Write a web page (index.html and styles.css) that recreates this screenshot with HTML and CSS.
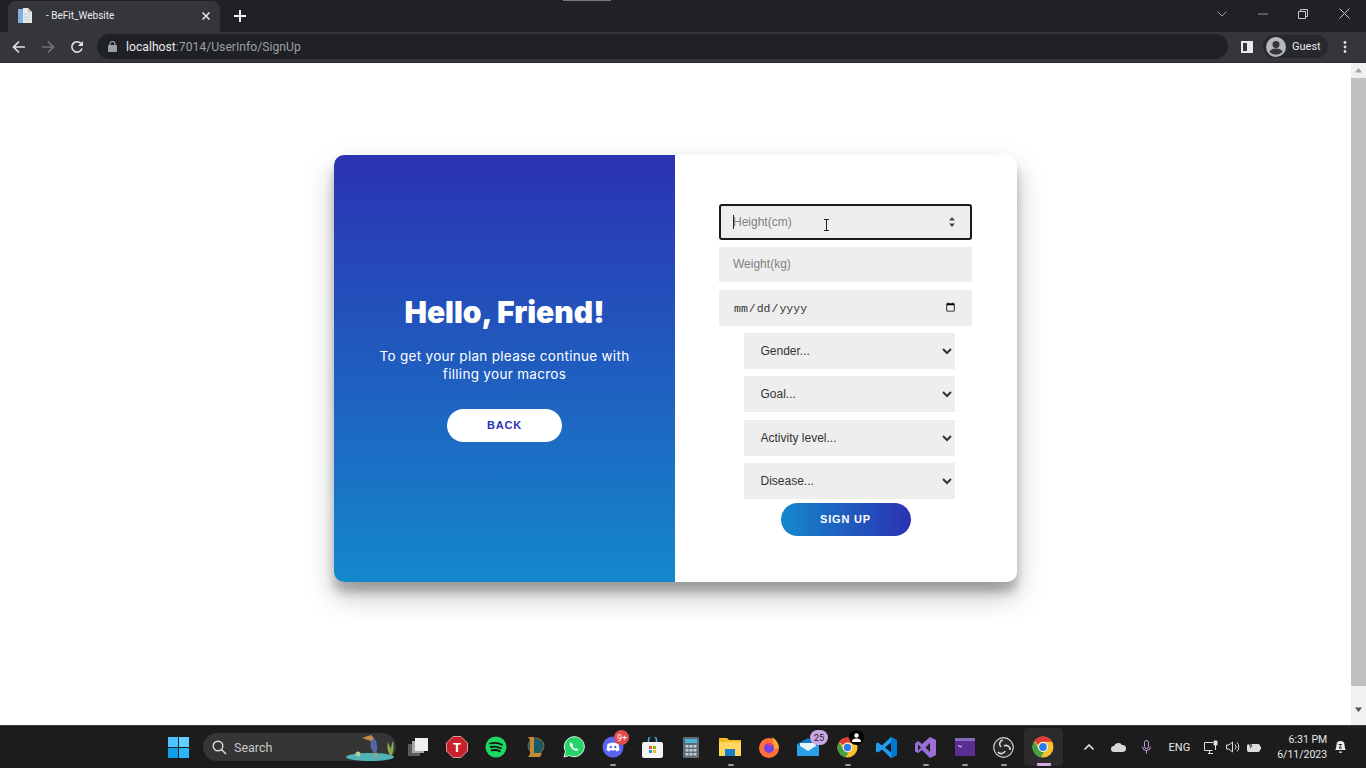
FILE: index.html
```html
<!DOCTYPE html>
<html lang="en">
<head>
    <meta charset="UTF-8">
    <title>BeFit_Website</title>
    <link rel="stylesheet" href="styles.css">
</head>
<body>
    <div class="capture-notch"></div>
    <!-- Browser tab strip -->
    <div class="tabstrip">
        <div class="tab">
            <svg class="favicon" width="14" height="15" viewBox="0 0 14 15"><path d="M0 1h5l1 1v13H0z" fill="#7fb2e0"/><path d="M5 0h5l4 4v11H5z" fill="#e8e8e8"/><path d="M10 0l4 4h-4z" fill="#b8b8b8"/><path d="M6 6h6M6 9h6M6 12h6" stroke="#bcd2e6"/></svg>
            <span class="tab-title">- BeFit_Website</span>
            <svg width="10" height="10" viewBox="0 0 10 10"><path d="M1.5 1.5l7 7M8.500 1.500l-7 7" stroke="#e8eaed" stroke-width="1.500"/></svg>
        </div>
        <svg class="newtab" width="12" height="12" viewBox="0 0 12 12"><path d="M6 0v12M0 6h12" stroke="#f1f3f4" stroke-width="2"/></svg>
        <div class="window-btns">
            <svg width="10" height="6" viewBox="0 0 10 6"><path d="M.5.500L5 5 9.500.500" fill="none" stroke="#9aa0a6"/></svg>
            <svg width="10" height="2" viewBox="0 0 10 2"><path d="M0 1h10" stroke="#8f9297"/></svg>
            <svg width="10" height="10" viewBox="0 0 10 10"><path d="M.5 2.500h7v7h-7zM2.500 2.500V.500h7v7h-2" fill="none" stroke="#c4c6c9"/></svg>
            <svg width="11" height="11" viewBox="0 0 11 11"><path d="M.5.500l10 10M10.500.500l-10 10" stroke="#c4c6c9"/></svg>
        </div>
    </div>

    <!-- Address bar row -->
    <div class="toolbar">
        <svg class="nav" width="14" height="14" viewBox="0 0 14 14"><path d="M13 7H2M7 1.500L1.500 7 7 12.500" fill="none" stroke="#dfe1e5" stroke-width="1.700"/></svg>
        <svg class="nav" width="14" height="14" viewBox="0 0 14 14"><path d="M1 7h11M7 1.500L12.500 7 7 12.500" fill="none" stroke="#6f7276" stroke-width="1.700"/></svg>
        <svg class="nav" width="14" height="14" viewBox="0 0 14 14"><path d="M12 8.500A5.200 5.200 0 1 1 11 3.500" fill="none" stroke="#dfe1e5" stroke-width="1.600"/><path d="M13 1v5H8z" fill="#dfe1e5"/></svg>
        <div class="omnibox">
            <svg width="9" height="11" viewBox="0 0 9 11"><rect y="4" width="9" height="7" rx="1" fill="#9aa0a6"/><path d="M2 4.500V3a2.500 2.500 0 0 1 5 0v1.500" fill="none" stroke="#9aa0a6" stroke-width="1.200"/></svg>
            <span class="url"><span class="url-host">localhost</span>:7014/UserInfo/SignUp</span>
        </div>
        <svg class="sidepanel" width="12" height="12" viewBox="0 0 12 12"><path d="M0 0h12v12H0z" fill="#e8eaed"/><path d="M2 2h4v8H2z" fill="#35363a"/></svg>
        <div class="profile">
            <svg width="20" height="20" viewBox="0 0 20 20"><circle cx="10" cy="10" r="10" fill="#b5b7ba"/><circle cx="10" cy="7.500" r="3.500" fill="#35363a"/><path d="M3.500 15c1-3 4-3.500 6.500-3.500s5.500.5 6.500 3.500a9 9 0 0 1-13 0z" fill="#35363a"/></svg>
            <span>Guest</span>
        </div>
        <svg class="menu-dots" width="4" height="12" viewBox="0 0 4 12"><circle cx="2" cy="1.500" r="1.400" fill="#dfe1e5"/><circle cx="2" cy="6" r="1.400" fill="#dfe1e5"/><circle cx="2" cy="10.500" r="1.400" fill="#dfe1e5"/></svg>
    </div>

    <!-- Page -->
    <div class="viewport">
        <div class="page">
            <div class="card">
                <div class="panel">
                    <h1>Hello, Friend!</h1>
                    <p>To get your plan please continue with filling your macros</p>
                    <button class="btn btn-ghost">Back</button>
                </div>
                <form class="form">
                    <div class="field-wrap">
                        <input class="field" type="text" placeholder="Height(cm)" autofocus>
                        <i class="caret"></i>
                        <svg class="spinner" width="6" height="10" viewBox="0 0 6 10"><path d="M3 0l3 3.500H0zM3 10L0 6.500h6z" fill="#444"/></svg>
                    </div>
                    <input class="field field-weight" type="text" placeholder="Weight(kg)">
                    <input class="field field-date" type="date">
                    <select class="pick"><option>Gender...</option></select>
                    <select class="pick"><option>Goal...</option></select>
                    <select class="pick pick-activity"><option>Activity level...</option></select>
                    <select class="pick"><option>Disease...</option></select>
                    <button class="btn btn-fill" type="button">Sign up</button>
                </form>
            </div>
        </div>
        <div class="scrollbar">
            <svg width="15" height="15" viewBox="0 0 15 15"><path d="M7.500 5L11 9.500H4z" fill="#a3a3a3"/></svg>
            <div class="thumb"></div>
            <svg width="15" height="15" viewBox="0 0 15 15"><path d="M7.500 10L11 5.500H4z" fill="#505050"/></svg>
        </div>
        <!-- mouse pointer over the first field -->
        <svg class="ibeam" width="7" height="12" viewBox="0 0 7 12"><path d="M1 .500h5M1 11.500h5M3.500.500v11" fill="none" stroke="#222"/></svg>
    </div>

    <!-- Windows taskbar -->
    <div class="taskbar">
        <svg class="winlogo" width="21" height="21" viewBox="0 0 21 21"><path d="M0 0h10v10H0z" fill="#4cc2ff"/><path d="M11 0h10v10H11z" fill="#5fd0ff"/><path d="M0 11h10v10H0z" fill="#0f9fe8"/><path d="M11 11h10v10H11z" fill="#2bb5f5"/></svg>
        <div class="search">
            <svg width="15" height="15" viewBox="0 0 15 15"><circle cx="6" cy="6" r="4.800" fill="none" stroke="#ddd" stroke-width="1.400"/><path d="M9.500 9.500L14 14" stroke="#ddd" stroke-width="1.500"/></svg>
            <span>Search</span>
            <svg class="bird" width="52" height="28" viewBox="0 0 52 28"><ellipse cx="24" cy="24" rx="24" ry="4" fill="#4fb3b8"/><path d="M26 4c4 1 6 8 5 14l-3 2c-3-3-5-9-2-16z" fill="#5566a8"/><path d="M16 5l9-3 3 3-3 3z" fill="#c98a4a"/><path d="M28 20v5M30 19v6" stroke="#c9a070"/><path d="M44 22c-3-5-3-9-2-13 1 3 2 5 3 7 0-3 1-6 2-8 1 5 1 9-1 14z" fill="#88a84a"/><circle cx="12" cy="21" r="2.500" fill="#b8c8a0"/></svg>
        </div>
        <div class="apps">
            <div class="app"><svg width="20" height="18" viewBox="0 0 20 18"><rect x="0" y="6" width="12" height="12" fill="#5d5d5d"/><rect x="4" y="3" width="12" height="12" fill="#a8a8a8"/><rect x="7" y="0" width="13" height="13" fill="#f0f0f0"/></svg></div>
            <div class="app"><svg width="22" height="22" viewBox="0 0 22 22"><path d="M7 .500h8L21.500 7v8L15 21.500H7L.500 15V7z" fill="#c8202c" stroke="#d9a0a0"/><text x="11" y="15.500" class="glyph">T</text></svg></div>
            <div class="app"><svg width="22" height="22" viewBox="0 0 22 22"><circle cx="11" cy="11" r="10.500" fill="#1ed760"/><path d="M5 7.500c4-1 8.500-.8 12 1.200M5.800 11c3.500-.8 7-.5 10 1.200M6.500 14.300c3-.6 5.800-.4 8.300 1" fill="none" stroke="#111" stroke-width="1.800" stroke-linecap="round"/></svg></div>
            <div class="app"><svg width="20" height="22" viewBox="0 0 20 22"><circle cx="11" cy="10" r="8" fill="#1a5a6a" stroke="#8a6a30"/><path d="M3 1h6v16h8l-2 4H3l2-3V4z" fill="#c08a3a"/></svg></div>
            <div class="app"><svg width="22" height="22" viewBox="0 0 22 22"><path d="M1 21l1.500-5.500A10 10 0 1 1 6.500 19.500z" fill="#25d366" stroke="#e8f5ec"/><path d="M7.500 6c-1.500 1.500-1 4 1.500 6.500s5 3 6.500 1.500l-2.200-2-1.300.8c-1-.5-2-1.500-2.500-2.500l.8-1.300z" fill="#fff"/></svg></div>
            <div class="app"><svg width="22" height="22" viewBox="0 0 22 22"><circle cx="11" cy="11" r="10.500" fill="#5865f2"/><path d="M5.500 8c3.500-2 7.500-2 11 0l1 6c-1 .8-2 1.200-3 1.400l-.8-1.300c-1.700.5-3.700.5-5.400 0l-.8 1.300c-1-.2-2-.6-3-1.400z" fill="#fff"/><circle cx="8.700" cy="11" r="1.200" fill="#5865f2"/><circle cx="13.300" cy="11" r="1.200" fill="#5865f2"/></svg><span class="badge badge-red">9+</span><i class="dot"></i></div>
            <div class="app"><svg width="21" height="21" viewBox="0 0 21 21"><path d="M6.500 5V3a4 4 0 0 1 8 0v2" fill="none" stroke="#3fb5e8" stroke-width="1.500"/><rect y="5" width="21" height="16" rx="2" fill="#f4f4f4"/><path d="M7 9h3v3H7z" fill="#f25022"/><path d="M11 9h3v3h-3z" fill="#7fba00"/><path d="M7 13h3v3H7z" fill="#00a4ef"/><path d="M11 13h3v3h-3z" fill="#ffb900"/></svg></div>
            <div class="app"><svg width="16" height="21" viewBox="0 0 16 21"><rect width="16" height="21" rx="1" fill="#5d6b75"/><rect x="2" y="2" width="12" height="4" fill="#4fb3d9"/><path d="M2.500 8h3v2.500h-3zM6.500 8h3v2.500h-3zM10.500 8h3v2.500h-3zM2.500 12h3v2.500h-3zM6.500 12h3v2.500h-3zM10.500 12h3v2.500h-3zM2.500 16h3v2.500h-3zM6.500 16h3v2.500h-3zM10.500 16h3v2.500h-3z" fill="#c5ced4"/></svg></div>
            <div class="app"><svg width="22" height="18" viewBox="0 0 22 18"><path d="M0 0h8l2 2h12v16H0z" fill="#f5b921"/><path d="M0 4h22v14H0z" fill="#ffd75e"/><path d="M6 11h10v7H6z" fill="#1a7fc8"/></svg><i class="dot"></i></div>
            <div class="app"><svg width="20" height="21" viewBox="0 0 20 21"><circle cx="10" cy="11" r="10" fill="#ff7139"/><path d="M13 0c5 3 7 8 7 11l-5 1c0-4-1-8-2-12z" fill="#ffa436"/><circle cx="10" cy="11" r="5" fill="#7542e5"/><path d="M6 7c3-2 7-1 8 2-3-1-5-1-8-2z" fill="#ff3d5a"/></svg></div>
            <div class="app"><svg width="22" height="18" viewBox="0 0 22 18"><path d="M0 6L11 0l11 6v12H0z" fill="#0f78c8"/><path d="M3 5h16v5l-8 4-8-4z" fill="#e8f2fa"/><path d="M0 6l11 7 11-7v12H0z" fill="#2ba0e8"/></svg><span class="badge badge-lilac">25</span></div>
            <div class="app"><svg class="chrome" width="21" height="21" viewBox="0 0 22 22"><use href="#chrome-logo"/></svg><span class="badge badge-black"><svg width="9" height="9" viewBox="0 0 9 9"><circle cx="4.500" cy="2.500" r="2.200" fill="#fff"/><path d="M0 9c0-3 2-3.500 4.500-3.500S9 6 9 9z" fill="#fff"/></svg></span><i class="dot"></i></div>
            <div class="app"><svg width="21" height="21" viewBox="0 0 21 21"><path d="M15 0l6 3v15l-6 3L6 12.500 2 15.500 0 14.500v-8l2-1 4 3z" fill="#1f9cf0"/><path d="M15 5.500L9 10.500l6 5z" fill="#1a1a1a"/><path d="M15 0l6 3v15l-6 3z" fill="#0078d4"/></svg></div>
            <div class="app"><svg width="21" height="21" viewBox="0 0 21 21"><path d="M15 0l6 3v15l-6 3-8-8-4 3-3-1.500v-8L3 4l4 3z" fill="#9a6fd8"/><path d="M15 6l-4.500 4.500L15 15z" fill="#1f1f1f"/><path d="M3 7.500v6l3-3z" fill="#1f1f1f"/></svg><i class="dot"></i></div>
            <div class="app"><svg width="20" height="18" viewBox="0 0 20 18"><rect width="20" height="18" fill="#5a2d91"/><rect width="20" height="3" fill="#8a6ab8"/><path d="M3 7l2 2 2-1" fill="none" stroke="#ddd"/></svg><i class="dot"></i></div>
            <div class="app"><svg width="21" height="21" viewBox="0 0 21 21"><circle cx="10.500" cy="10.500" r="9.800" fill="#2a2a2a" stroke="#d0d0d0" stroke-width="1.200"/><path d="M10 3a4 4 0 0 0-2 7M17 13a4 4 0 0 0-6-4M5 15a4 4 0 0 0 7-1" fill="none" stroke="#d8d8d8" stroke-width="1.600"/></svg><i class="dot"></i></div>
            <div class="app app-active"><svg width="22" height="22" viewBox="0 0 22 22"><use href="#chrome-logo"/></svg><i class="dot dot-active"></i></div>
        </div>
        <div class="tray">
            <svg class="tray-caret" width="10" height="6" viewBox="0 0 10 6"><path d="M.500 5.500L5 1l4.500 4.500" fill="none" stroke="#eee" stroke-width="1.500"/></svg>
            <svg class="tray-cloud" width="15" height="9" viewBox="0 0 15 9"><path d="M3 9a3 3 0 0 1 0-6 4.500 4.500 0 0 1 8-1 3.500 3.500 0 0 1 1 7z" fill="#d8d8d8"/></svg>
            <svg class="tray-mic" width="9" height="14" viewBox="0 0 9 14"><rect x="2.500" y=".500" width="4" height="8" rx="2" fill="none" stroke="#c9a0dc"/><path d="M.500 6.500a4 4 0 0 0 8 0M4.500 10.500v3" fill="none" stroke="#c9a0dc"/></svg>
            <span class="tray-lang">ENG</span>
            <svg class="tray-net" width="14" height="14" viewBox="0 0 14 14"><path d="M9 2.500H.500v8h8M4 13.500h5M5.500 10.500v3" fill="none" stroke="#ddd"/><path d="M10 1h3v4h-3zM11.500 5v5" fill="#ddd" stroke="#ddd"/></svg>
            <svg class="tray-vol" width="15" height="12" viewBox="0 0 15 12"><path d="M.500 4h2.500L6.500 1v10L3 8H.500z" fill="none" stroke="#ddd"/><path d="M9 3.500a3.500 3.500 0 0 1 0 5M11 1.500a6.500 6.500 0 0 1 0 9" fill="none" stroke="#ddd"/></svg>
            <svg class="tray-bat" width="15" height="12" viewBox="0 0 15 12"><rect x=".500" y="3.500" width="12" height="7" rx="1" fill="#ddd" stroke="#ddd"/><path d="M13.500 5.500v3" stroke="#ddd"/><path d="M4 0L2 4h3L3 7" fill="none" stroke="#222"/></svg>
            <div class="clock"><span>6:31 PM</span><span>6/11/2023</span></div>
            <svg class="tray-bell" width="13" height="14" viewBox="0 0 13 14"><path d="M1 10c1.500-1 1-3 1.500-5a4 4 0 0 1 8 0c.500 2 0 4 1.500 5z" fill="#eee"/><path d="M5 11.500a1.500 1.500 0 0 0 3 0z" fill="#eee"/><path d="M4.500 4.500h3L5 8h3" fill="none" stroke="#222"/></svg>
        </div>
    </div>

    <!-- shared chrome logo -->
    <svg class="defs" width="0" height="0">
        <defs>
            <g id="chrome-logo">
                <circle cx="11" cy="11" r="10.500" fill="#fbc02d"/>
                <path d="M11 .500a10.500 10.500 0 0 1 9.100 5.250H11a5.250 5.250 0 0 0-4.800 3L2.300 5A10.500 10.500 0 0 1 11 .500z" fill="#e53935"/>
                <path d="M2.300 5l4.600 8.500a5.250 5.250 0 0 0 5.200 2.600L9 21.300A10.500 10.500 0 0 1 2.300 5z" fill="#43a047"/>
                <circle cx="11" cy="11" r="5" fill="#fff"/>
                <circle cx="11" cy="11" r="3.900" fill="#2b7de9"/>
            </g>
        </defs>
    </svg>
</body>
</html>
```

FILE: styles.css
```css
* {
    box-sizing: border-box;
}
html, body {
    height: 100%;
    overflow: hidden;
}
body {
    margin: 0;
    display: flex;
    flex-direction: column;
    font-family: Roboto, "Liberation Sans", sans-serif;
    background-color: #fff;
}
.capture-notch {
    position: absolute;
    left: 563px;
    top: 0;
    width: 48px;
    height: 1px;
    background-color: #77787b;
}

/* browser chrome */
.tabstrip {
    height: 32px;
    display: flex;
    align-items: center;
    padding-left: 8px;
    background-color: #202124;
}
.tab {
    width: 212px;
    height: 31px;
    margin-top: 1px;
    padding: 0 9px 2px 10px;
    display: flex;
    align-items: center;
    background-color: #35363a;
    border-radius: 8px 8px 0 0;
    color: #e8eaed;
    font-size: 10px;
}
.favicon {
    margin-right: 14px;
}
.tab-title {
    flex: 1;
}
.newtab {
    margin: -1px 0 0 14px;
}
.window-btns {
    margin-left: auto;
    width: 149px;
    padding-right: 16px;
    margin-top: -5px;
    display: flex;
    align-items: center;
    justify-content: space-between;
}
.toolbar {
    height: 31px;
    display: flex;
    align-items: center;
    padding: 0 0 2px 12px;
    background-color: #35363a;
    box-shadow: inset 0 -1px 0 #2a2b2e;
}
.nav {
    margin-right: 15px;
}
.omnibox {
    width: 1131px;
    height: 25px;
    margin-left: -2px;
    padding-left: 11px;
    display: flex;
    align-items: center;
    gap: 9px;
    background-color: #202124;
    border-radius: 13px;
}
.url {
    font-size: 12.200px;
    color: #9aa0a6;
}
.url-host {
    color: #e8eaed;
}
.sidepanel {
    margin-left: 13px;
}
.profile {
    width: 65px;
    height: 23px;
    margin-left: 10px;
    padding-left: 3px;
    display: flex;
    align-items: center;
    gap: 6px;
    background-color: #27282b;
    border-radius: 12px;
    color: #e8eaed;
    font-size: 11px;
}
.menu-dots {
    margin-left: 15px;
}

/* page */
.viewport {
    position: relative;
    flex: 1;
    display: flex;
    min-height: 0;
}
.page {
    flex: 1;
    padding-top: 92px;
}
.card {
    width: 683px;
    height: 427px;
    margin: 0 auto;
    display: flex;
    border-radius: 10px;
    overflow: hidden;
    background-color: #fff;
    box-shadow: 0 14px 28px rgba(0, 0, 0, 0.25), 0 10px 10px rgba(0, 0, 0, 0.22);
}
.panel {
    width: 341px;
    padding: 140px 40px 0;
    display: flex;
    flex-direction: column;
    align-items: center;
    text-align: center;
    color: #fff;
    background: linear-gradient(to bottom, #2b32b2, #1488cc);
}
.panel h1 {
    margin: 0;
    font-family: Inter, "Liberation Sans", sans-serif;
    font-size: 30px;
    font-weight: 900;
    line-height: 34px;
    white-space: nowrap;
}
.panel p {
    margin: 18px 0 26px;
    font-family: Inter, "Liberation Sans", sans-serif;
    font-size: 13.500px;
    line-height: 18px;
    letter-spacing: 0.3px;
}
.btn {
    height: 33px;
    padding: 0 0 2px;
    border: none;
    border-radius: 17px;
    font-family: "Liberation Sans", sans-serif;
    font-size: 11px;
    font-weight: bold;
    letter-spacing: 0.8px;
    text-transform: uppercase;
}
.btn-ghost {
    width: 115px;
    color: #2b32b2;
    background-color: #fff;
}
.btn-fill {
    width: 130px;
    margin-top: -3px;
    color: #fff;
    background: linear-gradient(to right, #1488cc, #2b32b2);
}
.form {
    flex: 1;
    padding: 49px 1px 0 0;
    display: flex;
    flex-direction: column;
    align-items: center;
    gap: 7px;
}
.field, .pick {
    height: 36px;
    border: none;
    background-color: #eee;
    font-family: "Liberation Sans", sans-serif;
    font-size: 12px;
}
.field {
    width: 253px;
    padding: 0 14px;
}
.field-wrap {
    position: relative;
    height: 36px;
}
.field-wrap .field {
    display: block;
    caret-color: transparent;
}
.caret {
    position: absolute;
    left: 14px;
    top: 11px;
    width: 1px;
    height: 14px;
    background-color: #222;
}
.spinner {
    position: absolute;
    right: 17px;
    top: 13px;
}
.field:focus {
    outline: 2px solid #1a1a1a;
    outline-offset: -2px;
    border-radius: 3px;
}
.field::placeholder {
    color: #808080;
}
.field-weight {
    height: 35px;
    padding-bottom: 2px;
    margin-bottom: 1px;
}
.field-date {
    font-family: "Liberation Mono", monospace;
    font-size: 11.500px;
    color: #333;
}
.pick {
    width: 211px;
    margin-left: 7px;
    padding-left: 13px;
    color: #333;
}
.pick-activity {
    margin-top: 1px;
}
.scrollbar {
    width: 15px;
    display: flex;
    flex-direction: column;
    background-color: #f1f1f1;
}
.thumb {
    height: 608px;
    margin: 0 0 16px;
    background-color: #c1c1c1;
}
.ibeam {
    position: absolute;
    left: 823px;
    top: 156px;
}

/* taskbar */
.taskbar {
    height: 43px;
    padding-left: 168px;
    display: flex;
    align-items: center;
    background-color: #1c1c1c;
    border-top: 1px solid #3a3a3a;
    color: #e8e8e8;
}
.search {
    position: relative;
    width: 193px;
    height: 28px;
    margin-left: 14px;
    padding-left: 9px;
    display: flex;
    align-items: center;
    gap: 7px;
    background-color: #353535;
    border-radius: 14px;
    font-size: 12.500px;
    color: #c8c8c8;
}
.bird {
    position: absolute;
    right: -2px;
    top: 0;
}
.apps {
    display: flex;
    margin-left: 2px;
}
.app {
    position: relative;
    width: 39.100px;
    height: 38px;
    display: flex;
    align-items: center;
    justify-content: center;
}
.app-active {
    background-color: #2b2b2b;
    border-radius: 4px;
}
.dot {
    position: absolute;
    left: 17px;
    bottom: 0;
    width: 6px;
    height: 2px;
    border-radius: 1px;
    background-color: #9a9a9a;
}
.dot-active {
    left: 13px;
    width: 14px;
    height: 3px;
    background-color: #d8a8e0;
}
.badge {
    position: absolute;
    left: 21px;
    top: 2px;
    min-width: 15px;
    height: 15px;
    padding: 0 2px;
    display: flex;
    align-items: center;
    justify-content: center;
    border-radius: 8px;
    font-size: 9px;
    color: #fff;
}
.badge-red {
    background-color: #e5484d;
}
.badge-lilac {
    width: 18px;
    background-color: #c9a6e4;
    color: #222;
}
.badge-black {
    background-color: #000;
}
.glyph {
    font-family: "Liberation Sans", sans-serif;
    font-size: 13px;
    font-weight: bold;
    fill: #fff;
    text-anchor: middle;
}
.tray {
    flex: 1;
    display: flex;
    align-items: center;
    font-size: 11px;
}
.tray-caret {
    margin-left: 21px;
}
.tray-cloud {
    margin-left: 17px;
}
.tray-mic {
    margin-left: 16px;
}
.tray-lang {
    margin-left: 18px;
}
.tray-net {
    margin-left: 14px;
}
.tray-vol {
    margin-left: 8px;
}
.tray-bat {
    margin-left: 6px;
}
.clock {
    width: 65px;
    margin-left: 0;
    display: flex;
    flex-direction: column;
    align-items: flex-end;
    font-size: 10.500px;
    line-height: 15px;
}
.tray-bell {
    margin-left: 7px;
}
.defs {
    position: absolute;
}
```
